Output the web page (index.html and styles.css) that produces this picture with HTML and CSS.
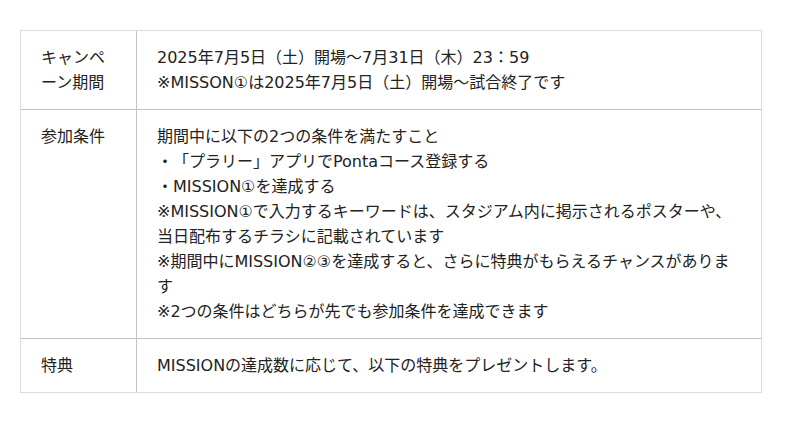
FILE: index.html
```html
<!DOCTYPE html>
<html lang="ja">
<head>
<meta charset="utf-8">
<title>キャンペーン概要</title>
<link rel="stylesheet" href="styles.css">
</head>
<body>
<div class="info">
  <div class="row">
    <div class="label">キャンペーン期間</div>
    <div class="value">
      <p>2025年7月5日（土）開場〜7月31日（木）23：59</p>
      <p>※MISSON①は2025年7月5日（土）開場〜試合終了です</p>
    </div>
  </div>
  <div class="row">
    <div class="label">参加条件</div>
    <div class="value">
      <p>期間中に以下の2つの条件を満たすこと</p>
      <p>・「プラリー」アプリでPontaコース登録する</p>
      <p>・MISSION①を達成する</p>
      <p>※MISSION①で入力するキーワードは、スタジアム内に掲示されるポスターや、当日配布するチラシに記載されています</p>
      <p>※期間中にMISSION②③を達成すると、さらに特典がもらえるチャンスがあります</p>
      <p>※2つの条件はどちらが先でも参加条件を達成できます</p>
    </div>
  </div>
  <div class="row">
    <div class="label">特典</div>
    <div class="value">
      <p>MISSIONの達成数に応じて、以下の特典をプレゼントします。</p>
    </div>
  </div>
</div>
</body>
</html>
```
FILE: styles.css
```css
html, body {
  margin: 0;
  padding: 0;
  background: #fff;
}
body {
  font-family: "DejaVu Sans", "Noto Sans CJK JP", sans-serif;
  font-size: 16px;
  line-height: 25px;
  color: #222;
  text-spacing-trim: space-all;
}
.info {
  box-sizing: border-box;
  width: 742px;
  margin: 30px 0 0 20px;
  border: 1px solid #dcdcdc;
}
.row {
  display: grid;
  grid-template-columns: 116px 1fr;
}
.row + .row {
  border-top: 1px solid #c4c4c4;
}
.label {
  padding: 14px 20px;
  border-right: 1px solid #c4c4c4;
}
.value {
  padding: 14px 20px;
}
.value p {
  margin: 0;
}
```
